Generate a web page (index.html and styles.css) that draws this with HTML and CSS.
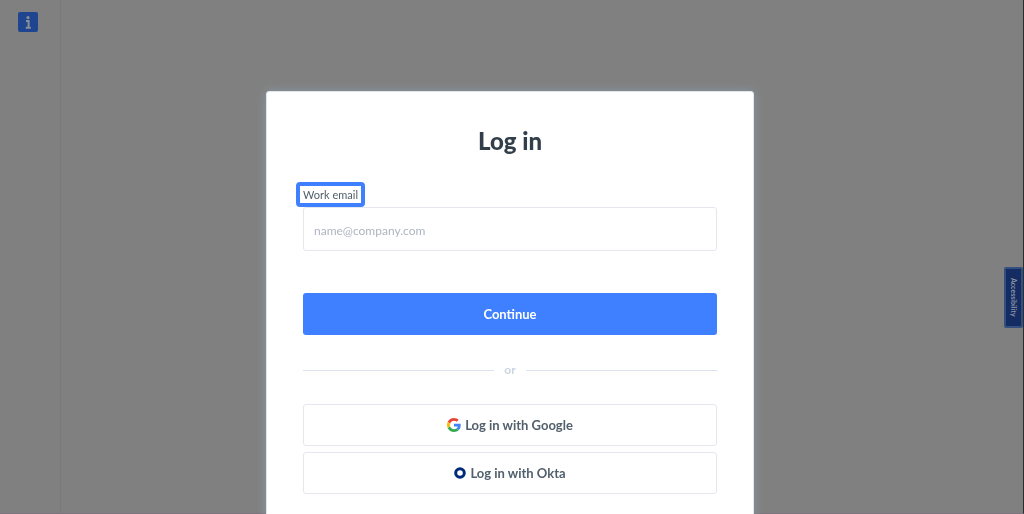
FILE: index.html
```html
<!DOCTYPE html>
<html lang="en">
<head>
    <meta charset="utf-8">
    <title>Log in</title>
    <link rel="stylesheet" href="styles.css">
</head>
<body>
    <aside class="sidebar">
        <button class="info-btn" type="button" aria-label="Info">
            <svg width="20" height="20" viewBox="0 0 20 20" aria-hidden="true">
                <circle cx="10" cy="5.6" r="1.6" fill="#8a8f96"/>
                <path d="M8 8.900h2.600v6.500M7.800 15.700h5" fill="none" stroke="#8a8f96" stroke-width="2"/>
            </svg>
        </button>
    </aside>

    <main class="overlay">
        <div class="modal">
            <h1 class="title">Log in</h1>

            <form class="login-form">
                <label class="field-label" for="email">Work email</label>
                <input class="field-input" type="email" id="email" placeholder="name@company.com">
                <button class="btn btn-primary" type="submit">Continue</button>
            </form>

            <div class="divider">or</div>

            <div class="providers">
                <button class="btn btn-outline" type="button">
                    <svg width="14" height="14" viewBox="0 0 48 48" aria-hidden="true">
                        <path fill="#ea4335" d="M24 9.5c3.5 0 6.700 1.200 9.200 3.600l6.900-6.900C35.900 2.400 30.500 0 24 0 14.600 0 6.500 5.400 2.600 13.200l8 6.200C12.400 13.700 17.700 9.500 24 9.500z"/>
                        <path fill="#4285f4" d="M47 24.600c0-1.600-.2-3.100-.4-4.600H24v9h12.900c-.6 3-2.300 5.500-4.700 7.200l7.700 6C44.400 38 47 31.800 47 24.600z"/>
                        <path fill="#fbbc05" d="M10.500 28.600A14.500 14.500 0 0 1 9.800 24c0-1.600.3-3.100.7-4.600l-7.900-6.200A24 24 0 0 0 0 24c0 3.900.9 7.500 2.600 10.800z"/>
                        <path fill="#34a853" d="M24 48c6.500 0 11.900-2.100 15.900-5.800l-7.700-6C30 37.700 27.200 38.500 24 38.500c-6.300 0-11.600-4.200-13.500-9.900l-7.900 6.200C6.500 42.600 14.600 48 24 48z"/>
                    </svg>
                    Log in with Google
                </button>
                <button class="btn btn-outline" type="button">
                    <svg width="12" height="12" viewBox="0 0 12 12" aria-hidden="true">
                        <circle cx="6" cy="6" r="4.300" fill="none" stroke="#00297a" stroke-width="3"/>
                    </svg>
                    Log in with Okta
                </button>
            </div>
        </div>
    </main>

    <button class="accessibility-btn" type="button">Accessibility</button>
</body>
</html>
```

FILE: styles.css
```css
:root {
    --backdrop: #808080;
    --primary: #3e80ff;
    --text-dark: #323f4b;
    --text-muted: #52606d;
    --border-color: #e4e7ee;
}

* {
    box-sizing: border-box;
}

body {
    margin: 0;
    height: 100vh;
    overflow: hidden;
    background: var(--backdrop);
    border-right: 1px solid #2b2d30;
    border-bottom: 1px solid #7b767b;
    color: var(--text-dark);
    font-family: Lato, sans-serif;
}

button,
input {
    font-family: inherit;
}

.sidebar {
    width: 61px;
    height: 100%;
    padding: 12px 18px;
    border-right: 1px solid #797979;
}

.info-btn {
    display: block;
    width: 20px;
    height: 20px;
    padding: 0;
    background: #1f4590;
    border: none;
    border-radius: 2px;
}

/* Login dialog */
.overlay {
    position: fixed;
    inset: 0;
    display: flex;
    justify-content: center;
    align-items: flex-start;
    padding: 91px 4px 0 0;
}

.modal {
    width: 488px;
    padding: 36px;
    background: white;
    border: 1px solid #dfe6ee;
    border-radius: 3px;
    box-shadow: 0 0 10px #8797a4;
}

.title {
    margin: 0 0 28px;
    font-size: 24px;
    font-weight: 900;
    line-height: 26px;
    text-align: center;
}

.login-form {
    display: flex;
    flex-direction: column;
    align-items: flex-start;
}

.field-label {
    padding: 3px;
    margin-left: -7px;
    border: 4px solid var(--primary);
    border-radius: 4px;
    color: var(--text-muted);
    font-size: 11px;
    line-height: 11px;
}

.field-input {
    width: 100%;
    height: 44px;
    margin-bottom: 42px;
    padding: 2px 10px 0;
    border: 1px solid var(--border-color);
    border-radius: 3px;
    font-size: 12px;
}

.field-input::placeholder {
    color: #adb5bf;
}

.btn {
    display: flex;
    justify-content: center;
    align-items: center;
    gap: 4px;
    width: 100%;
    height: 42px;
    padding: 0 6px;
    border-radius: 3px;
    font-size: 13px;
    font-weight: bold;
    cursor: pointer;
}

.btn-primary {
    background: var(--primary);
    border: none;
    color: white;
}

.btn-outline {
    background: white;
    border: 1px solid var(--border-color);
    color: var(--text-muted);
}

.divider {
    display: flex;
    align-items: center;
    gap: 10px;
    margin: 27px 0 26px;
    color: #cbd5e1;
    font-size: 12px;
    font-weight: bold;
    line-height: 16px;
}

.divider::before,
.divider::after {
    content: "";
    flex: 1;
    height: 1px;
    background: #dae2ee;
}

.providers {
    display: flex;
    flex-direction: column;
    gap: 6px;
}

/* Tab on the right edge of the window */
.accessibility-btn {
    position: fixed;
    top: 267px;
    right: 1px;
    width: 19px;
    height: 61px;
    padding: 0;
    background: #142c62;
    border: 2px solid #34507f;
    border-radius: 2px;
    color: #8b93a3;
    font-size: 7px;
    font-weight: bold;
    writing-mode: vertical-rl;
}
```
